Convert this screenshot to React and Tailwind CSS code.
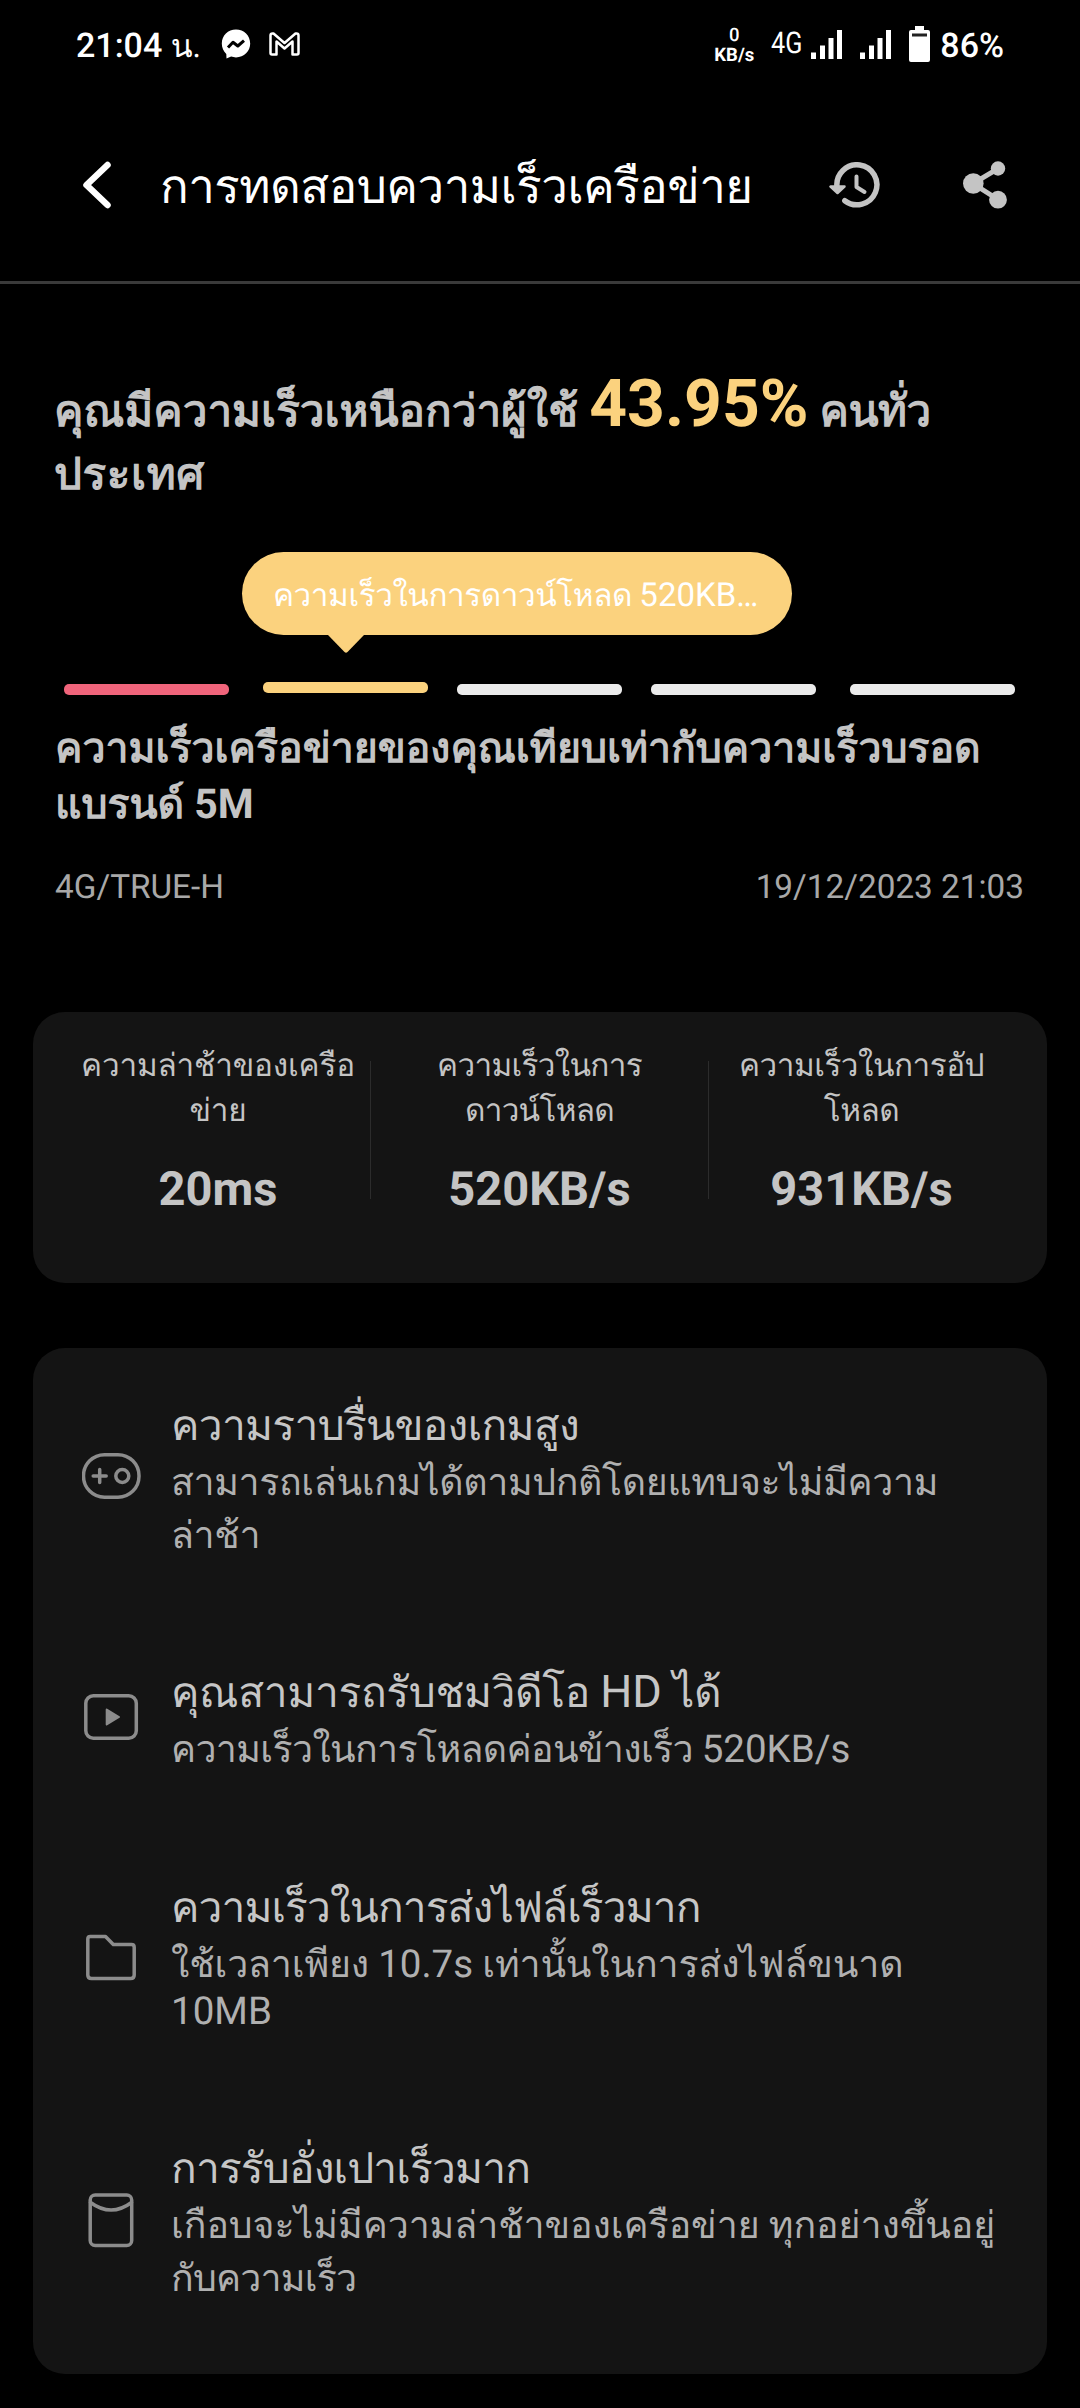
const SEGMENTS = [
  "bg-[#f0647b]",
  "ml-[34px] -mt-[2px] bg-[#fbd27e]",
  "ml-[29px] bg-[#ebebeb]",
  "ml-[29px] bg-[#ebebeb]",
  "ml-[34px] bg-[#ebebeb]",
];

const STATS = [
  { label: ["ความล่าช้าของเครือ", "ข่าย"], value: "20ms", width: "w-[304px] tracking-[-0.2px]" },
  { label: ["ความเร็วในการ", "ดาวน์โหลด"], value: "520KB/s", width: "w-[337px] tracking-[-0.7px]" },
  { label: ["ความเร็วในการอัป", "โหลด"], value: "931KB/s", width: "w-[305px] tracking-[-0.5px]" },
];

/* Latin runs are set slightly larger than the Thai around them */
function Latin({ children, className = "" }) {
  return <span className={`leading-[0] tracking-normal ${className}`}>{children}</span>;
}

function MessengerIcon() {
  return (
    <svg className="w-[30px] h-[30px]" viewBox="0 0 30 30">
      <path fill="#fff" d="M15 .6C7 .6 .8 6.5 .8 14.6c0 4.200 1.700 7.800 4.500 10.300l.2 4.700 4.600-2c1.500.5 3.200.8 4.900.8 8 0 14.200-5.900 14.200-13.800S23 .6 15 .6z" />
      <path d="M7 18.500l5-5.300 4.800 3.800 6.200-5.400" fill="none" stroke="#000" strokeWidth="3" strokeLinejoin="round" />
    </svg>
  );
}

function GmailIcon() {
  return (
    <svg className="w-[31px] h-[24px]" viewBox="0 0 31 24" fill="none" stroke="#fff" strokeWidth="2.500" strokeLinejoin="round">
      <path d="M1.500 3.500q0-2 2-2h1L15.500 11l11-9.500h1q2 0 2 2V21q0 1.500-1.500 1.500h-4.500V9.500l-8 7-8-7v13H3Q1.500 22.500 1.500 21z" />
    </svg>
  );
}

function SignalIcon({ className }) {
  return (
    <svg className={`w-[31px] h-[29px] ${className}`} viewBox="0 0 31 29" fill="#fff">
      <rect x="0" y="22.500" width="5" height="6.500" />
      <rect x="9" y="15.500" width="5" height="13.500" />
      <rect x="17.500" y="8" width="5" height="21" />
      <rect x="26" y="0" width="5" height="29" />
    </svg>
  );
}

function BatteryIcon() {
  return (
    <svg className="ml-[18px] w-[21px] h-[36px]" viewBox="0 0 21 36">
      <path fill="#fff" d="M6 0h9v4h4q2 0 2 2v28q0 2-2 2H2q-2 0-2-2V6q0-2 2-2h4z" />
      <rect x="3" y="7.500" width="15" height="3" fill="#222" />
    </svg>
  );
}

function StatusBar() {
  return (
    <div className="flex h-[88px] items-center pl-[76px] pr-[76px] text-white">
      <span className="pt-[3px] text-[34px] font-medium leading-none">
        21:04 <span className="text-[32px] font-normal">น.</span>
      </span>
      <div className="ml-[20px]"><MessengerIcon /></div>
      <div className="ml-[18px]"><GmailIcon /></div>

      <div className="ml-auto flex items-center">
        <div className="flex w-[40px] flex-col items-center pt-[2px] text-[18.500px] font-bold leading-[20px]">
          <span className="font-medium">0</span>
          <span>KB/s</span>
        </div>
        <span className="ml-[17px] inline-block w-[32px] origin-left scale-x-[0.84] text-[30px] leading-none">4G</span>
        <SignalIcon className="ml-[8px]" />
        <SignalIcon className="ml-[18px]" />
        <BatteryIcon />
        <span className="ml-[10px] pt-[3px] text-[34px] font-medium leading-none">86%</span>
      </div>
    </div>
  );
}

function Header() {
  return (
    <header className="flex h-[196px] items-center border-b-[3px] border-[#3a3a3a] pl-[82px] pr-[73px]">
      <svg className="h-[48px] w-[30px]" viewBox="0 0 30 48" fill="none" stroke="#fff" strokeWidth="6.500" strokeLinecap="round" strokeLinejoin="round">
        <path d="M25.500 4L4.500 24l21 20" />
      </svg>
      <h1 className="ml-[48px] pt-[5px] text-[47.500px] leading-[58px] tracking-[-0.55px] text-white">
        การทดสอบความเร็วเครือข่าย
      </h1>
      <svg className="ml-auto h-[46px] w-[51px]" viewBox="0 0 51 46" fill="none" stroke="#c4c4c4" strokeWidth="5" strokeLinecap="round" strokeLinejoin="round">
        <path d="M8 25A20 20 0 1 1 15.800 38.700" strokeWidth="5.500" />
        <path d="M27.500 14.500v10.500l8 5" strokeWidth="4" />
        <path d="M1.500 24.500h14L8.500 31z" fill="#c4c4c4" strokeWidth="2.500" />
      </svg>
      <svg className="ml-[83px] h-[48px] w-[44px]" viewBox="0 0 44 48" fill="#c4c4c4">
        <path d="M35 7.700L10 22.500l25 16" fill="none" stroke="#c4c4c4" strokeWidth="5" />
        <circle cx="10.300" cy="22.500" r="10.300" />
        <circle cx="35" cy="7.500" r="7.200" />
        <circle cx="35" cy="38.700" r="8.900" />
      </svg>
    </header>
  );
}

function Summary() {
  return (
    <section className="pt-[96px] text-[#c4c4c4]">
      <h2 className="pl-[54px] text-[44px] font-bold leading-[63px]">
        คุณมีความเร็วเหนือกว่าผู้ใช้ <Latin className="text-[66px] text-[#fbd27e]">43.95%</Latin>{" "}
        <span className="tracking-[-0.5px]">คนทั่ว</span>
        <br />
        <span className="tracking-[0.6px]">ประเทศ</span>
      </h2>

      {/* Speech bubble over the second segment */}
      <div className="ml-[242px] mt-[46px] w-[550px]">
        <div className="flex h-[83px] items-center rounded-full bg-[#fbd27e] pl-[31px] pt-[5px] text-[31.500px] leading-none tracking-[-0.45px] whitespace-nowrap text-white">
          <p>ความเร็วในการดาวน์โหลด <Latin className="text-[33px]">520KB…</Latin></p>
        </div>
        <svg className="ml-[86px] h-[18px] w-[36px]" viewBox="0 0 36 18" fill="#fbd27e">
          <path d="M0 0h36L19.500 17q-1.500 1.500-3 0z" />
        </svg>
      </div>

      <div className="mt-[31px] flex h-[11px] items-start pl-[64px]">
        {SEGMENTS.map((color, i) => (
          <div key={i} className={`h-[11px] w-[165px] rounded-[5px] ${color}`} />
        ))}
      </div>

      <p className="mt-[26px] pl-[55px] text-[41px] font-bold leading-[56px] whitespace-nowrap">
        ความเร็วเครือข่ายของคุณเทียบเท่ากับความเร็วบรอด
        <br />
        แบรนด์ 5M
      </p>

      <div className="mt-[35px] flex justify-between pl-[55px] pr-[56px] text-[33.300px] leading-[40px] text-[#a8a8a8]">
        <span>4G/TRUE-H</span>
        <span>19/12/2023 21:03</span>
      </div>
    </section>
  );
}

function StatsCard() {
  return (
    <section className="mx-[33px] mt-[104px] flex h-[271px] rounded-[32px] bg-[#141414] px-[33px] text-center text-[#c4c4c4]">
      {STATS.map(({ label, value, width }, i) => (
        <div key={value} className="flex">
          {i > 0 && <div className="mt-[49px] h-[138px] w-px bg-[#2c2c2c]" />}
          <div className={`pt-[31px] ${width}`}>
            <p className="text-[31.500px] leading-[45px] whitespace-nowrap">
              {label[0]}
              <br />
              {label[1]}
            </p>
            <p className="mt-[29px] text-[47px] font-bold leading-[56px] tracking-normal">{value}</p>
          </div>
        </div>
      ))}
    </section>
  );
}

function Row({ icon, iconClass, className = "", title, titleClass, bodyClass, children }) {
  return (
    <div className={`flex items-start ${className}`}>
      <svg className={`h-[60px] w-[60px] shrink-0 ${iconClass}`} viewBox="0 0 60 60" fill="none" stroke="#8c8c8c" strokeWidth="3.500" strokeLinecap="round" strokeLinejoin="round">
        {icon}
      </svg>
      <div className="ml-[29px] whitespace-nowrap">
        <h3 className={`text-[42.500px] leading-[58px] text-[#c6c6c6] ${titleClass}`}>{title}</h3>
        <p className={`text-[37.500px] text-[#b0b0b0] ${bodyClass}`}>{children}</p>
      </div>
    </div>
  );
}

function DetailsCard() {
  return (
    <section className="mx-[33px] mt-[65px] h-[1026px] rounded-[32px] bg-[#141414] pl-[49px] pt-[50px]">
      <Row
        iconClass="mt-[48px]"
        icon={
          <>
            <rect x="1.500" y="8.700" width="55.500" height="42.500" rx="21" />
            <path d="M17.700 23.500v13M11.200 30h13" />
            <circle cx="40.300" cy="30" r="6.500" />
          </>
        }
        title="ความราบรื่นของเกมสูง"
        titleClass="tracking-[-0.7px]"
        bodyClass="pt-[1px] leading-[53px] tracking-[-0.37px]"
      >
        สามารถเล่นเกมได้ตามปกติโดยแทบจะไม่มีความ
        <br />
        ล่าช้า
      </Row>

      <Row
        className="mt-[102px]"
        iconClass="mt-[22px]"
        icon={
          <>
            <rect x="3.800" y="8.800" width="50.500" height="42.500" rx="7.500" />
            <path d="M24.700 22.500L37 30l-12.300 7.500z" fill="#8c8c8c" strokeWidth="2" />
          </>
        }
        title={<>คุณสามารถรับชมวิดีโอ <Latin className="text-[45px]">HD </Latin>ได้</>}
        titleClass="tracking-[-0.35px]"
        bodyClass="pt-[1px] leading-[53px] tracking-[-0.65px]"
      >
        ความเร็วในการโหลดค่อนข้างเร็ว <Latin className="text-[38.500px]">520KB/s</Latin>
      </Row>

      <Row
        className="mt-[103px]"
        iconClass="mt-[47px]"
        icon={<path d="M5.800 12q0-2.500 2.500-2.500h15.200l7.800 8h18.200q2.700 0 2.700 2.700V48q0 3.500-3.500 3.500H9.500q-3.700 0-3.700-3.500z" />}
        title="ความเร็วในการส่งไฟล์เร็วมาก"
        titleClass="tracking-[-0.92px]"
        bodyClass="pt-[4px] leading-[47px] tracking-[-0.15px]"
      >
        ใช้เวลาเพียง <Latin className="text-[38.500px]">10.7s</Latin> เท่านั้นในการส่งไฟล์ขนาด
        <br />
        <Latin className="text-[38.500px]">10MB</Latin>
      </Row>

      <Row
        className="mt-[105px]"
        iconClass="mt-[49px]"
        icon={
          <>
            <rect x="8.200" y="5" width="41.500" height="50.500" rx="5" />
            <path d="M8.500 12.500q20.700 15 41 0" />
          </>
        }
        title="การรับอั่งเปาเร็วมาก"
        titleClass="tracking-[-0.85px]"
        bodyClass="pt-[1px] leading-[53px] tracking-[-0.07px]"
      >
        เกือบจะไม่มีความล่าช้าของเครือข่าย ทุกอย่างขึ้นอยู่
        <br />
        <span className="tracking-[-0.8px]">กับความเร็ว</span>
      </Row>
    </section>
  );
}

export default function App() {
  return (
    <main className="h-[2408px] w-[1080px] overflow-hidden bg-black font-['Roboto','Noto_Sans',sans-serif] [text-rendering:geometricPrecision]">
      <StatusBar />
      <Header />
      <Summary />
      <StatsCard />
      <DetailsCard />
    </main>
  );
}
